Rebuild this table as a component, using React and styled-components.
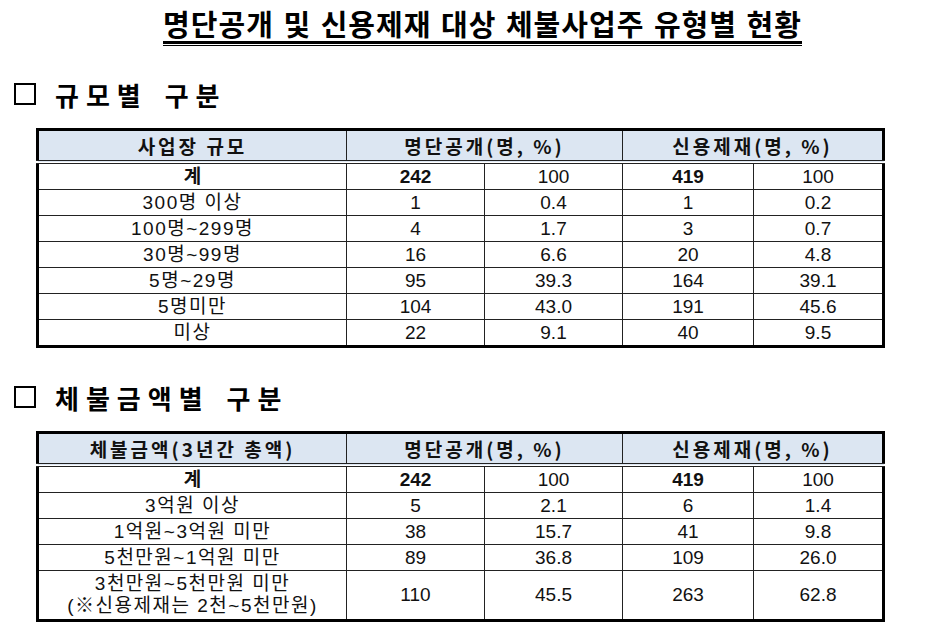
import React from "react";
import styled, { createGlobalStyle } from "styled-components";

const GlobalStyle = createGlobalStyle`
  body {
    margin: 0;
    background: #ffffff;
    font-family: "Liberation Sans", "Noto Sans CJK KR", sans-serif;
    color: #111;
  }
`;

const Page = styled.div`
  width: 947px;
  height: 639px;
  overflow: hidden;
  padding: 6px 0 0 14px;
  box-sizing: border-box;
`;

const TitleRow = styled.div`
  display: flex;
  justify-content: center;
  padding-left: 4px;
`;

const TitleBlock = styled.div`
  display: flex;
  flex-direction: column;
`;

const Title = styled.h1`
  margin: 0;
  font-family: "Noto Sans CJK KR", sans-serif;
  font-size: 29px;
  font-weight: 700;
  line-height: 35px;
  letter-spacing: 1px;
  word-spacing: 2px;
  color: #000;
`;

const TitleRule = styled.div`
  height: 1px;
  border-top: 3px solid #000;
  border-bottom: 1px solid #000;
`;

const SectionHeading = styled.h2`
  display: flex;
  align-items: center;
  gap: 19px;
  margin: ${p => p.$top}px 0 19px 0;
  height: 30px;
  font-family: "Noto Sans CJK KR", sans-serif;
  font-size: 26px;
  font-weight: 700;
  letter-spacing: 7px;
  word-spacing: 4px;
  color: #000;
`;

const Square = styled.span`
  width: 18px;
  height: 18px;
  border: 2px solid #000;
`;

const Table = styled.table`
  margin-left: 22px;
  width: 846px;
  border-collapse: collapse;
  border: 3px solid #000;
  table-layout: fixed;
`;

const HeadCell = styled.th`
  height: 29px;
  padding: 0;
  background: #dce6f2;
  border: 1px solid #222;
  border-bottom: 4px double #222;
  font-family: "Noto Sans CJK KR", sans-serif;
  font-size: 19px;
  font-weight: 700;
  letter-spacing: 3px;
  color: #111;
  text-align: center;
`;

const Cell = styled.td`
  height: ${p => p.$tall ? 48 : 25}px;
  padding: 0;
  border: 1px solid #222;
  font-size: 19px;
  font-weight: ${p => p.$bold ? 700 : 400};
  letter-spacing: ${p => p.$label ? 1.5 : 0}px;
  line-height: 22px;
  text-align: center;
  color: #111;
`;

const widths = [309, 138, 138, 131, 130];

const DataTable = ({ label, rows }) => (
  <Table>
    <colgroup>
      {widths.map((w, i) => <col key={i} style={{ width: w }} />)}
    </colgroup>
    <thead>
      <tr>
        <HeadCell>{label}</HeadCell>
        <HeadCell colSpan={2}>명단공개(명, %)</HeadCell>
        <HeadCell colSpan={2}>신용제재(명, %)</HeadCell>
      </tr>
    </thead>
    <tbody>
      <tr>
        <Cell $bold>계</Cell>
        <Cell $bold>242</Cell>
        <Cell>100</Cell>
        <Cell $bold>419</Cell>
        <Cell>100</Cell>
      </tr>
      {rows.map((r, i) => (
        <tr key={i}>
          <Cell $label $tall={r.tall}>{r.name}</Cell>
          {r.values.map((v, j) => <Cell key={j} $tall={r.tall}>{v}</Cell>)}
        </tr>
      ))}
    </tbody>
  </Table>
);

const sizeRows = [
  { name: "300명 이상", values: ["1", "0.4", "1", "0.2"] },
  { name: "100명~299명", values: ["4", "1.7", "3", "0.7"] },
  { name: "30명~99명", values: ["16", "6.6", "20", "4.8"] },
  { name: "5명~29명", values: ["95", "39.3", "164", "39.1"] },
  { name: "5명미만", values: ["104", "43.0", "191", "45.6"] },
  { name: "미상", values: ["22", "9.1", "40", "9.5"] }
];

const amountRows = [
  { name: "3억원 이상", values: ["5", "2.1", "6", "1.4"] },
  { name: "1억원~3억원 미만", values: ["38", "15.7", "41", "9.8"] },
  { name: "5천만원~1억원 미만", values: ["89", "36.8", "109", "26.0"] },
  {
    name: <>3천만원~5천만원 미만<br />(※신용제재는 2천~5천만원)</>,
    values: ["110", "45.5", "263", "62.8"],
    tall: true
  }
];

const App = () => (
  <Page>
    <GlobalStyle />
    <TitleRow>
      <TitleBlock>
        <Title>명단공개 및 신용제재 대상 체불사업주 유형별 현황</Title>
        <TitleRule />
      </TitleBlock>
    </TitleRow>

    <SectionHeading $top={33}>
      <Square />
      <span>규모별 구분</span>
    </SectionHeading>
    <DataTable label="사업장 규모" rows={sizeRows} />

    <SectionHeading $top={34}>
      <Square />
      <span>체불금액별 구분</span>
    </SectionHeading>
    <DataTable label="체불금액(3년간 총액)" rows={amountRows} />
  </Page>
);

export default App;
